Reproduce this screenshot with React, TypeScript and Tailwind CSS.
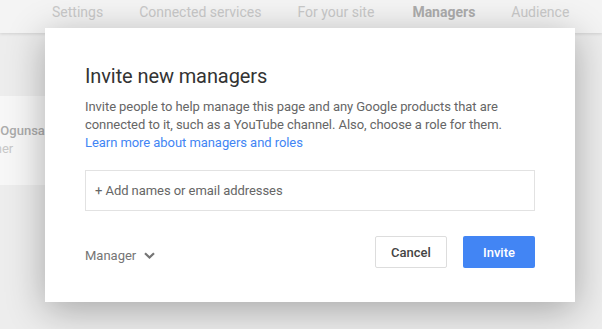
import React from "react";

export default function App() {
  const tabs = [
    { label: "Settings", bold: false },
    { label: "Connected services", bold: false },
    { label: "For your site", bold: false },
    { label: "Managers", bold: true },
    { label: "Audience", bold: false },
  ];
  return (
    <div
      className="relative w-[602px] h-[329px] overflow-hidden bg-[#ededed]"
      style={{ fontFamily: "Roboto, 'Noto Sans', Arial, sans-serif" }}
    >
      {/* header */}
      <div className="h-[33px] bg-[#f4f4f4] shadow-[0_1px_3px_rgba(0,0,0,0.12)] flex items-center pl-[52px] gap-[36px] pb-[9px]">
        {tabs.map((t) => (
          <span
            key={t.label}
            className={
              t.bold
                ? "text-[14px] font-bold text-[#acacac] whitespace-nowrap ml-[2px]"
                : "text-[14px] text-[#c9c9c9] whitespace-nowrap"
            }
          >
            {t.label}
          </span>
        ))}
      </div>

      {/* background card */}
      <div className="mt-[63px] h-[89px] w-[300px] bg-[#f7f7f7] flex flex-col justify-center">
        <div className="text-[13px] font-medium text-[#ababab] leading-[18px] mt-[-2px] -ml-[39px] whitespace-nowrap">
          Tunde Ogunsanya
        </div>
        <div className="text-[13px] text-[#c8c8c8] leading-[18px] -ml-[24px] whitespace-nowrap">Owner</div>
      </div>

      {/* dialog */}
      <div className="absolute left-[45px] top-[28px] w-[530px] h-[274px] bg-white shadow-[0_8px_36px_rgba(0,0,0,0.3)] px-10 pt-[36px] flex flex-col">
        <h1 className="text-[20px] leading-[24px] text-[#333333] font-normal tracking-[-0.1px]">Invite new managers</h1>
        <p className="mt-[10px] text-[13px] leading-[18px] text-[#666666] tracking-[-0.06px]">
          Invite people to help manage this page and any Google products that are
          connected to it, such as a YouTube channel. Also, choose a role for them.
          <br />
          <span className="text-[#4285f4]">Learn more about managers and roles</span>
        </p>
        <div className="mt-[18px] h-[41px] border border-[#e2e2e2] flex items-center px-[9px]">
          <span className="text-[13px] text-[#666666] tracking-[-0.06px]">+ Add names or email addresses</span>
        </div>
        <div className="mt-[25px] flex items-center justify-between">
          <div className="flex items-center gap-[8px] pt-[7px]">
            <span className="text-[13px] text-[#757575]">Manager</span>
            <svg width="11" height="7" viewBox="0 0 11 7">
              <path d="M1 1.2 L5.5 5.5 L10 1.2" fill="none" stroke="#757575" strokeWidth="2.2" />
            </svg>
          </div>
          <div className="flex items-center gap-4">
            <button className="w-[72px] h-[32px] rounded-[2px] border border-[#dddddd] bg-white text-[13px] font-medium text-[#444444] pt-[1px]">
              Cancel
            </button>
            <button className="w-[72px] h-[32px] rounded-[2px] bg-[#4285f4] text-[13px] font-medium text-white pt-[1px]">
              Invite
            </button>
          </div>
        </div>
      </div>
    </div>
  );
}
